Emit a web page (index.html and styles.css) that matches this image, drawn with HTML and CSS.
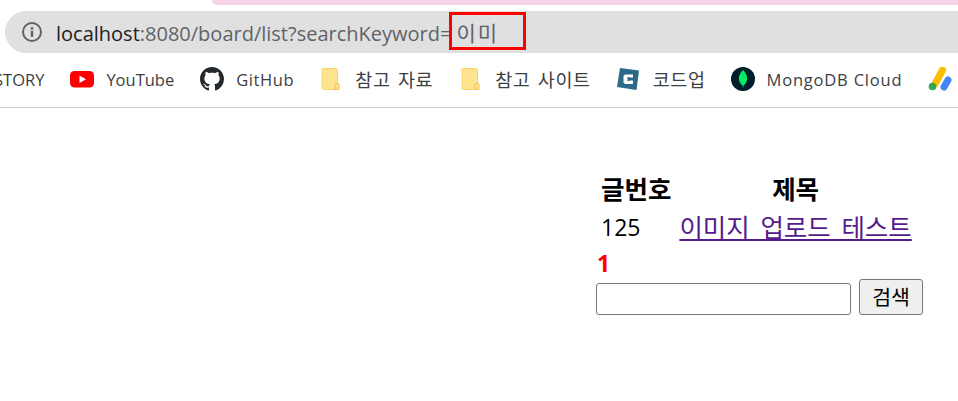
FILE: index.html
```html
<!DOCTYPE html>
<html lang="ko">
<head>
  <meta charset="UTF-8" />
  <title>게시물 목록</title>
  <link rel="stylesheet" href="styles.css">
</head>
<body>
  <div class="top-strip"><div class="pink-tab"></div></div>

  <div class="address-bar">
    <svg class="info-icon" width="20" height="20" viewBox="0 0 20 20">
      <circle cx="10" cy="10" r="9" fill="none" stroke="#5f6368" stroke-width="2"/>
      <rect x="8.800" y="8.800" width="2.400" height="6" fill="#5f6368"/>
      <rect x="8.800" y="5.200" width="2.400" height="2.400" fill="#5f6368"/>
    </svg>
    <div class="url"><span class="host">localhost</span>:8080/board/list?searchKeyword=<span class="keyword">이미</span></div>
    <div class="highlight-box"></div>
  </div>

  <div class="bookmarks">
    <span class="bm bm-cut">STORY</span>
    <span class="bm">
      <svg width="24" height="24" viewBox="0 0 24 24">
        <rect x="0" y="4" width="24" height="16.5" rx="4.5" fill="#ff0000"/>
        <path d="M9.5 8.5 L16 12.2 L9.5 16 Z" fill="#fff"/>
      </svg>
      YouTube
    </span>
    <span class="bm bm-github">
      <svg width="24" height="24" viewBox="0 0 16 16">
        <path fill="#24292e" d="M8 0C3.58 0 0 3.58 0 8c0 3.54 2.29 6.53 5.47 7.59.4.07.55-.17.55-.38 0-.19-.01-.82-.01-1.49-2.01.37-2.53-.49-2.69-.94-.09-.23-.48-.94-.82-1.13-.28-.15-.68-.52-.01-.53.63-.01 1.08.58 1.23.82.72 1.21 1.87.87 2.33.66.07-.52.28-.87.51-1.07-1.78-.2-3.64-.89-3.64-3.95 0-.87.31-1.59.82-2.15-.08-.2-.36-1.02.08-2.12 0 0 .67-.21 2.2.82.64-.18 1.32-.27 2-.27s1.36.09 2 .27c1.53-1.04 2.2-.82 2.2-.82.44 1.1.16 1.92.08 2.12.51.56.82 1.27.82 2.15 0 3.07-1.87 3.75-3.65 3.95.29.25.54.73.54 1.48 0 1.07-.01 1.93-.01 2.2 0 .21.15.46.55.38A8.01 8.01 0 0 0 16 8c0-4.42-3.58-8-8-8z"/>
      </svg>
      GitHub
    </span>
    <span class="bm bm-ko">
      <svg width="24" height="24" viewBox="0 0 24 24">
        <path d="M4.500 1.500 H17.500 Q19.500 1.500 19.500 3.500 V22.500 H6 Q4 22.500 4 20.500 V2 Z" fill="#ffe38f" stroke="#f7d565"/>
        <rect x="17" y="16.500" width="4" height="6" rx="1" fill="#ffe38f" stroke="#e8c04a"/>
      </svg>
      참고 자료
    </span>
    <span class="bm bm-ko">
      <svg width="24" height="24" viewBox="0 0 24 24">
        <path d="M4.500 1.500 H17.500 Q19.500 1.500 19.500 3.500 V22.500 H6 Q4 22.500 4 20.500 V2 Z" fill="#ffe38f" stroke="#f7d565"/>
        <rect x="17" y="16.500" width="4" height="6" rx="1" fill="#ffe38f" stroke="#e8c04a"/>
      </svg>
      참고 사이트
    </span>
    <span class="bm bm-ko">
      <svg width="24" height="24" viewBox="0 0 24 24">
        <path d="M4 1 L23 3.500 L20.500 23 L1 20 Z" fill="#2c6a8a"/>
        <path d="M17 7.500 H9 L7.500 9 V15.500 L9 17 H17 V13.500 H13.500 V14 H11.500 V10 H13.500 V10.500 H17 Z" fill="#fff"/>
      </svg>
      코드업
    </span>
    <span class="bm bm-mongo">
      <svg width="24" height="24" viewBox="0 0 24 24">
        <circle cx="12" cy="12" r="12" fill="#001e2b"/>
        <path d="M12 3 C8 7.500 7.500 10.500 8 13 C8.500 16 10.500 17.500 11.500 18.500 L12 21.500 L12.500 18.500 C13.500 17.500 15.500 16 16 13 C16.500 10.500 16 7.500 12 3 Z" fill="#00ed64"/>
      </svg>
      MongoDB Cloud
    </span>
    <svg class="ads-icon" width="24" height="24" viewBox="0 0 24 24">
      <path d="M14.500 3 L7 17" stroke="#fbbc04" stroke-width="7" stroke-linecap="round"/>
      <path d="M20 13 L16 20" stroke="#4285f4" stroke-width="7" stroke-linecap="round"/>
      <circle cx="4.500" cy="19.500" r="3.800" fill="#34a853"/>
    </svg>
  </div>

  <main class="content">
    <table class="board">
      <thead>
        <tr><th>글번호</th><th>제목</th></tr>
      </thead>
      <tbody>
        <tr><td class="num">125</td><td><a href="#" class="post-link">이미지 업로드 테스트</a></td></tr>
      </tbody>
    </table>
    <div class="paging"><strong>1</strong></div>
    <form class="search">
      <input type="text" class="search-input" />
      <button type="button" class="search-btn">검색</button>
    </form>
  </main>
</body>
</html>
```

FILE: styles.css
```css
* {
  box-sizing: border-box;
}

html, body {
  height: 100%;
}

body {
  margin: 0;
  background: #fff;
  overflow: hidden;
  font-family: "Open Sans", "Noto Sans CJK KR", sans-serif;
  color: #000;
}

.top-strip {
  height: 11px;
  padding-left: 212px;
}

.pink-tab {
  height: 5px;
  background: #f5d5e5;
  border-bottom-left-radius: 8px;
}

/* Address bar */
.address-bar {
  position: relative;
  display: flex;
  align-items: center;
  height: 42px;
  margin-left: 5px;
  padding-left: 17px;
  background: #e0e0e0;
  border-radius: 21px 0 0 21px;
}

.url {
  margin-left: 14px;
  font-size: 20px;
  color: #5f6368;
  white-space: nowrap;
}

.host {
  color: #202124;
}

.keyword {
  margin-left: 5px;
  font-size: 21px;
  letter-spacing: 2px;
}

.highlight-box {
  position: absolute;
  left: 444px;
  top: 1px;
  width: 77px;
  height: 38px;
  border: 3px solid #f00;
}

/* Bookmarks */
.bookmarks {
  display: flex;
  align-items: center;
  height: 55px;
  margin-left: -6px;
  padding-bottom: 2px;
  border-bottom: 1px solid #ccc;
  font-size: 16.500px;
  color: #3c4043;
  white-space: nowrap;
  overflow: hidden;
}

.bm {
  display: flex;
  flex: none;
  align-items: center;
  gap: 12px;
  margin-right: 26px;
}

.bm-github {
  margin-right: 24px;
  letter-spacing: .6px;
}

.bm-ko {
  gap: 13px;
  margin-right: 25px;
  font-size: 18.500px;
  word-spacing: 2px;
  letter-spacing: .6px;
}

.bm-mongo {
  letter-spacing: .8px;
}

.ads-icon {
  flex: none;
}

/* Board */
.content {
  padding: 62px 0 0 596px;
}

.board {
  border-spacing: 2px;
  font-size: 25.500px;
}

.board th {
  padding: 0 3px;
  line-height: 34px;
  font-size: 25.500px;
}

.board td {
  padding: 1px 3px;
  line-height: 36px;
}

.board .num {
  font-size: 23px;
}

.post-link {
  color: #551a8b;
  word-spacing: 4px;
}

.paging {
  margin-left: 1px;
  font-size: 23px;
  line-height: 31px;
  color: #f00;
}

.search {
  display: flex;
  align-items: flex-end;
  gap: 8px;
}

.search-input {
  width: 255px;
  height: 32px;
  border: 1px solid #767676;
  border-radius: 3px;
  background: #fff;
}

.search-btn {
  width: 64px;
  height: 36px;
  padding: 0;
  border: 1px solid #767676;
  border-radius: 3px;
  background: #efefef;
  font: inherit;
  font-size: 20.500px;
  line-height: 1;
  color: #000;
}
```
